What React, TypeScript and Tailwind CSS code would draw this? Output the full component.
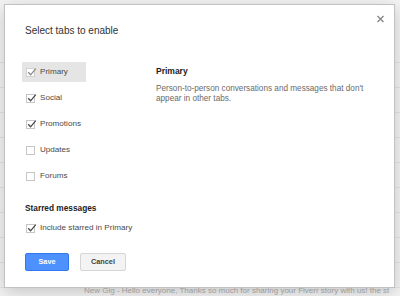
import React from "react";

function Check({ checked, light }: { checked: boolean; light?: boolean }) {
  return (
    <span className={`relative w-[9px] h-[9px] border bg-white shrink-0 ${light ? "border-[#d0d0d0]" : "border-[#c6c6c6]"}`}>
      {checked && (
        <svg className="absolute left-[0px] top-[-2px]" width="10" height="10" viewBox="0 0 10 10">
          <path d="M1.2 5.2 L3.6 7.8 L8.8 1.6" fill="none" stroke={light ? "#8a8a8a" : "#4a4a4a"} strokeWidth="1.3" />
        </svg>
      )}
    </span>
  );
}

function Item({ label, checked, active }: { label: string; checked: boolean; active?: boolean }) {
  return (
    <div className={`flex items-center h-[20px] w-[64px] pl-[4px] gap-[5px] ${active ? "bg-[#e5e5e5]" : ""}`}>
      <Check checked={checked} light={active} />
      <span className="text-[8.1px] leading-[10px] text-[#4a4a4a] whitespace-nowrap">{label}</span>
    </div>
  );
}

export default function App() {
  const rows = Array.from({ length: 12 });
  return (
    <div className="relative w-[400px] h-[296px] overflow-hidden bg-[#f4f4f4]" style={{ fontFamily: '"Liberation Sans", Arial, sans-serif' }}>
      <div className="flex flex-col pt-[38px]">
        {rows.map((_, i) => (
          <div key={i} className="h-[25px] border-b border-[#e4e4e4]" />
        ))}
      </div>
      <div className="absolute left-0 bottom-[0px] w-full h-[10px] flex items-center pl-[84px] text-[8px] text-[#b0b0b0] whitespace-nowrap">
        New Gig - Hello everyone, Thanks so much for sharing your Fiverr story with us! the st
      </div>
      <div className="absolute left-[4px] top-[4px] w-[391px] h-[284px] bg-white border border-[#c2c2c2] shadow-[0_4px_16px_rgba(0,0,0,0.2)] px-[20px] pt-[20px]">
        <button className="absolute right-[10px] top-[10px] w-[7px] h-[8px]">
          <svg width="7" height="8" viewBox="0 0 7 8">
            <path d="M0.5 1 L6.5 7 M6.5 1 L0.5 7" stroke="#888" strokeWidth="1.4" />
          </svg>
        </button>
        <div className="text-[10px] leading-[12px] text-[#333]">Select tabs to enable</div>
        <div className="flex mt-[25px] -ml-[3px]">
          <div className="flex flex-col gap-[6px] w-[64px]">
            <Item label="Primary" checked active />
            <Item label="Social" checked />
            <Item label="Promotions" checked />
            <Item label="Updates" checked={false} />
            <Item label="Forums" checked={false} />
          </div>
          <div className="ml-[70px] w-[220px] pt-[3.5px]">
            <div className="text-[8.5px] leading-[10px] font-bold text-[#222]">Primary</div>
            <div className="mt-[8px] text-[8.2px] leading-[10.5px] text-[#6a6a6a]">
              Person-to-person conversations and messages that don't appear in other tabs.
            </div>
          </div>
        </div>
        <div className="mt-[17px] text-[8.3px] leading-[10px] font-bold text-[#222]">Starred messages</div>
        <div className="mt-[5px] -ml-[3px]">
          <div className="flex items-center h-[20px] pl-[4px] gap-[5px]">
            <Check checked />
            <span className="text-[8.1px] leading-[10px] text-[#4a4a4a] whitespace-nowrap">Include starred in Primary</span>
          </div>
        </div>
        <div className="mt-[15px] flex gap-[11px] items-center">
          <button className="w-[44px] h-[18px] bg-[#4d90fe] border border-[#3079ed] rounded-[2px] text-white text-[7.3px] font-bold leading-none">
            Save
          </button>
          <button className="w-[46px] h-[18px] bg-[#f3f3f3] border border-[#d6d6d6] rounded-[2px] text-[#444] text-[7.3px] font-bold leading-none">
            Cancel
          </button>
        </div>
      </div>
    </div>
  );
}
